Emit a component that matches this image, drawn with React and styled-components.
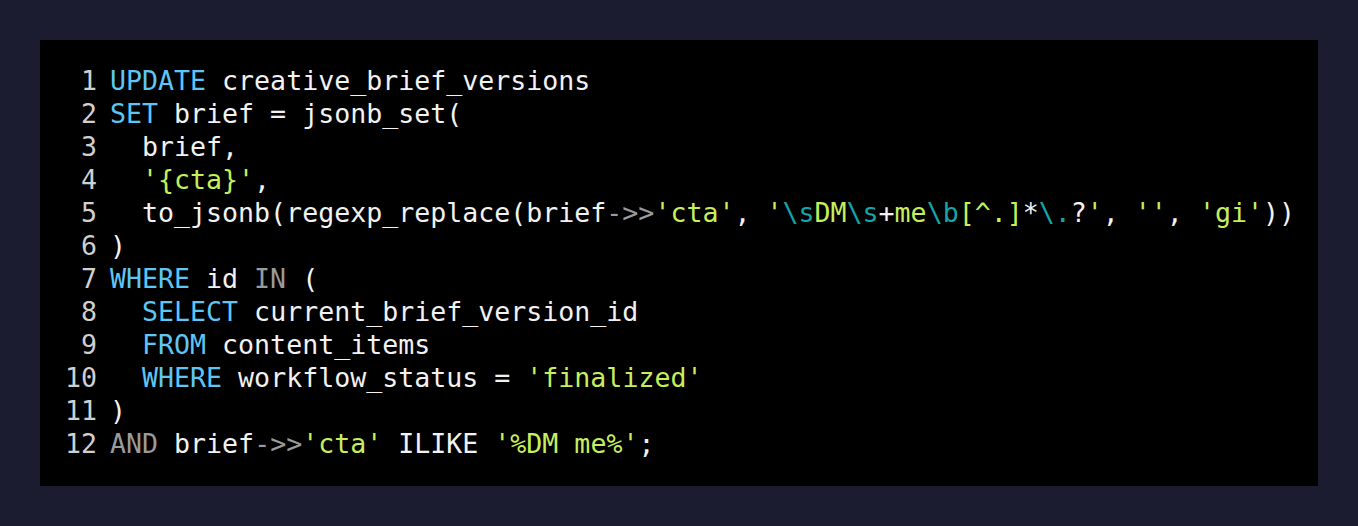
import React from "react";
import styled, { createGlobalStyle } from "styled-components";

const Global = createGlobalStyle`
  html, body { margin: 0; padding: 0; background: #1c1c31; }
  body { width: 1358px; height: 526px; overflow: hidden; }
`;

const Page = styled.div`
  box-sizing: border-box;
  width: 1358px;
  height: 526px;
  padding: 40px;
  background: #1c1c31;
`;

const Panel = styled.pre`
  box-sizing: border-box;
  margin: 0;
  width: 100%;
  height: 100%;
  background: #000;
  padding: 24px 24px 24px 25px;
  font-family: "DejaVu Sans Mono", monospace;
  font-size: 26.6px;
  line-height: 33px;
  color: #f2f2f2;
  display: grid;
  grid-template-columns: 32px 1fr;
  column-gap: 13px;
  align-content: start;
`;

const Num = styled.span`
  text-align: right;
  color: #d0d0d0;
`;

const Line = styled.span`
  white-space: pre;
`;

const colors = {
  k: "#5ec6f6",
  s: "#c6ef5c",
  e: "#14a5a8",
  o: "#9b9b9b",
};

const Tok = styled.span`
  color: ${(p) => colors[p.$t] || "inherit"};
`;

const K = (t) => ["k", t];
const S = (t) => ["s", t];
const E = (t) => ["e", t];
const O = (t) => ["o", t];
const T = (t) => ["", t];

const lines = [
  [K("UPDATE"), T(" creative_brief_versions")],
  [K("SET"), T(" brief = jsonb_set(")],
  [T("  brief,")],
  [T("  "), S("'{cta}'"), T(",")],
  [
    T("  to_jsonb(regexp_replace(brief"),
    O("->>"),
    S("'cta'"),
    T(", "),
    S("'"),
    E("\\s"),
    S("DM"),
    E("\\s"),
    T("+"),
    S("me"),
    E("\\b"),
    S("[^.]"),
    T("*"),
    E("\\."),
    T("?"),
    S("'"),
    T(", "),
    S("''"),
    T(", "),
    S("'gi'"),
    T("))"),
  ],
  [T(")")],
  [K("WHERE"), T(" id "), O("IN"), T(" (")],
  [T("  "), K("SELECT"), T(" current_brief_version_id")],
  [T("  "), K("FROM"), T(" content_items")],
  [T("  "), K("WHERE"), T(" workflow_status = "), S("'finalized'")],
  [T(")")],
  [O("AND"), T(" brief"), O("->>"), S("'cta'"), T(" ILIKE "), S("'%DM me%'"), T(";")],
];

export default function App() {
  return (
    <>
      <Global />
      <Page>
        <Panel>
          {lines.map((toks, i) => (
            <React.Fragment key={i}>
              <Num>{i + 1}</Num>
              <Line>
                {toks.map(([t, text], j) => (
                  <Tok key={j} $t={t}>
                    {text}
                  </Tok>
                ))}
              </Line>
            </React.Fragment>
          ))}
        </Panel>
      </Page>
    </>
  );
}
